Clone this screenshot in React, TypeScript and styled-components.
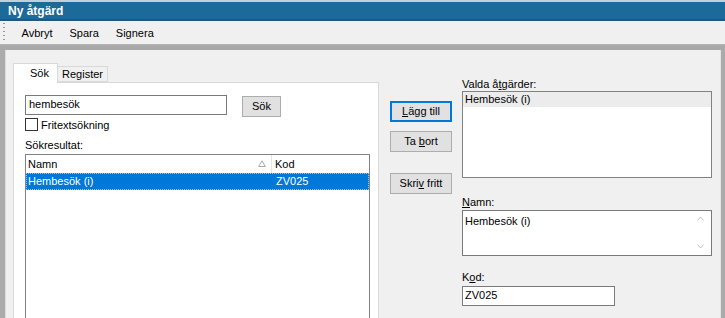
import React from "react";
import styled, { createGlobalStyle } from "styled-components";

const GlobalStyle = createGlobalStyle`
  html, body { margin: 0; padding: 0; background: #f0f0f0; }
  body { font-family: "Liberation Sans", Arial, sans-serif; font-size: 11px; color: #000; }
  * { box-sizing: border-box; }
`;

const Window = styled.div`
  width: 725px;
  height: 318px;
  overflow: hidden;
  display: flex;
  flex-direction: column;
  background: #f0f0f0;
`;

const TopEdge = styled.div`
  height: 2px;
  background: #c3d0da;
  flex: none;
`;

const TitleBar = styled.div`
  height: 19px;
  flex: none;
  background: #1c6a9a;
  border-bottom: 2px solid #275777;
  color: #fff;
  font-weight: bold;
  font-size: 12px;
  line-height: 17px;
  padding: 1px 0 0 8px;
`;

const Toolbar = styled.div`
  height: 23px;
  flex: none;
  display: flex;
  align-items: center;
  padding-left: 3px;
  background: #f0f0f0;
`;

const Grip = styled.div`
  width: 2px;
  height: 19px;
  margin-right: 8px;
  background: repeating-linear-gradient(to bottom, #9a9a9a 0 1px, transparent 1px 4px);
`;

const ToolItem = styled.div`
  padding: 0 8.5px;
  line-height: 20px;
  color: #000;
`;

const Splitter = styled.div`
  height: 6px;
  flex: none;
  background: #a9a9a9;
  border-top: 1px solid #b4b4b4;
`;

const Body = styled.div`
  flex: 1;
  min-height: 0;
  display: flex;
  align-items: flex-start;
  padding: 13px 0 0 8px;
  border-left: 5px solid #ababab;
  border-right: 4px solid #ababab;
  box-shadow: inset 1px 0 0 #dcdcdc, inset -1px 0 0 #e4e4e4;
  overflow: hidden;
`;

const TabControl = styled.div`
  width: 366px;
  height: 300px;
  display: flex;
  flex-direction: column;
  flex: none;
`;

const TabStrip = styled.div`
  height: 19px;
  display: flex;
  align-items: flex-end;
  flex: none;
`;

const Tab = styled.div<{ $active?: boolean }>`
  position: relative;
  z-index: ${(p) => (p.$active ? 1 : 0)};
  height: ${(p) => (p.$active ? "20px" : "16px")};
  margin-bottom: ${(p) => (p.$active ? "-1px" : "0")};
  margin-left: ${(p) => (p.$active ? "0" : "-1px")};
  width: ${(p) => (p.$active ? "45px" : "51px")};
  padding-left: ${(p) => (p.$active ? "8px" : "0")};
  display: flex;
  align-items: center;
  justify-content: center;
  background: ${(p) => (p.$active ? "#ffffff" : "#f0f0f0")};
  border: 1px solid #d9d9d9;
  border-bottom: ${(p) => (p.$active ? "none" : "1px solid #d9d9d9")};
  padding-bottom: ${(p) => (p.$active ? "2px" : "0")};
`;

const TabPanel = styled.div`
  flex: 1;
  background: #ffffff;
  border: 1px solid #d9d9d9;
  padding: 12px 0 0 11px;
  display: flex;
  flex-direction: column;
`;

const SearchRow = styled.div`
  display: flex;
  align-items: flex-start;
  gap: 15px;
`;

const TextBox = styled.div<{ $w: number; $h?: number }>`
  width: ${(p) => p.$w}px;
  height: ${(p) => p.$h ?? 20}px;
  border: 1px solid #7a7a7a;
  background: #fff;
  padding: 0 3px;
  line-height: 17px;
  white-space: nowrap;
`;

const Button = styled.div<{ $w: number; $focused?: boolean }>`
  width: ${(p) => p.$w}px;
  height: 21px;
  flex: none;
  background: #e1e1e1;
  border: 1px solid ${(p) => (p.$focused ? "#0078d7" : "#adadad")};
  box-shadow: ${(p) => (p.$focused ? "inset 0 0 0 1px #0078d7" : "none")};
  display: flex;
  align-items: center;
  justify-content: center;
  padding-bottom: 1px;
`;

const SearchButton = styled(Button)`
  margin-top: 1px;
`;

const U = styled.span`
  text-decoration: underline;
  text-underline-offset: 1px;
`;

const CheckRow = styled.div`
  display: flex;
  align-items: center;
  gap: 3px;
  margin-top: 1px;
  height: 13px;
`;

const CheckBox = styled.div`
  width: 13px;
  height: 13px;
  border: 1px solid #333;
  background: #fff;
`;

const FieldLabel = styled.div<{ $top: number }>`
  margin-top: ${(p) => p.$top}px;
  line-height: 13px;
  height: 13px;
`;

const ListView = styled.div`
  margin-top: 2px;
  width: 345px;
  height: 200px;
  border: 1px solid #828282;
  background: #fff;
`;

const ListHeader = styled.div`
  display: flex;
  height: 18px;
`;

const HeaderCell = styled.div<{ $w?: number }>`
  position: relative;
  width: ${(p) => (p.$w ? `${p.$w}px` : "auto")};
  flex: ${(p) => (p.$w ? "none" : "1")};
  padding-left: ${(p) => (p.$w ? "2px" : "3px")};
  line-height: 18px;
  border-right: ${(p) => (p.$w ? "1px solid #e5e5e5" : "none")};
  display: flex;
  align-items: center;
`;

const SortMark = styled.svg`
  position: absolute;
  right: 5px;
  top: 5px;
`;

const ListRow = styled.div`
  display: flex;
  height: 17px;
  background: #0078d7;
  color: #fff;
  outline: 1px dotted #9cc8ef;
  outline-offset: -1px;
`;

const RowCell = styled.div<{ $w?: number }>`
  width: ${(p) => (p.$w ? `${p.$w}px` : "auto")};
  flex: ${(p) => (p.$w ? "none" : "1")};
  padding-left: ${(p) => (p.$w ? "2px" : "3px")};
  line-height: 16px;
`;

const ButtonColumn = styled.div`
  margin-left: 11px;
  padding-top: 38px;
  display: flex;
  flex-direction: column;
  flex: none;
`;

const ButtonGap = styled.div<{ $h: number }>`
  height: ${(p) => p.$h}px;
`;

const RightColumn = styled.div`
  margin-left: 10px;
  padding-top: 14px;
  width: 250px;
  display: flex;
  flex-direction: column;
  flex: none;
`;

const SideLabel = styled.div<{ $top: number }>`
  margin-top: ${(p) => p.$top}px;
  height: 14px;
  line-height: 14px;
`;

const PickList = styled.div`
  height: 87px;
  border: 1px solid #828282;
  background: #fff;
  padding: 0;
`;

const PickItem = styled.div`
  height: 15px;
  line-height: 14px;
  padding-left: 2px;
  background: #ececec;
`;

const MultiBox = styled.div`
  margin-top: 1px;
  height: 46px;
  border: 1px solid #7a7a7a;
  background: #fff;
  display: flex;
`;

const MultiText = styled.div`
  flex: 1;
  padding: 3px 0 0 2px;
  line-height: 14px;
`;

const ScrollTrack = styled.div`
  width: 17px;
  margin-right: 2px;
  display: flex;
  flex-direction: column;
  justify-content: space-between;
  align-items: center;
  padding: 5px 0 6px;
`;

const KodBox = styled(TextBox)`
  margin-top: 2px;
  padding-left: 2px;
`;

const Chevron = ({ up }: { up?: boolean }) => (
  <svg width="7" height="5" viewBox="0 0 7 5">
    <path
      d={up ? "M0.5 4.5 L3.5 1 L6.5 4.5" : "M0.5 0.5 L3.5 4 L6.5 0.5"}
      fill="none"
      stroke="#c2c2c2"
      strokeWidth="1"
    />
  </svg>
);

export default function App() {
  return (
    <>
      <GlobalStyle />
      <Window>
        <TopEdge />
        <TitleBar>Ny åtgärd</TitleBar>
        <Toolbar>
          <Grip />
          <ToolItem>Avbryt</ToolItem>
          <ToolItem>Spara</ToolItem>
          <ToolItem>Signera</ToolItem>
        </Toolbar>
        <Splitter />
        <Body>
          <TabControl>
            <TabStrip>
              <Tab $active>Sök</Tab>
              <Tab>Register</Tab>
            </TabStrip>
            <TabPanel>
              <SearchRow>
                <TextBox $w={202}>hembesök</TextBox>
                <SearchButton $w={39}>Sök</SearchButton>
              </SearchRow>
              <CheckRow>
                <CheckBox />
                <span>Fritextsökning</span>
              </CheckRow>
              <FieldLabel $top={8}>Sökresultat:</FieldLabel>
              <ListView>
                <ListHeader>
                  <HeaderCell $w={246}>
                    Namn
                    <SortMark width="8" height="7" viewBox="0 0 8 7">
                      <path d="M4 0.8 L7.4 6.5 L0.6 6.5 Z" fill="none" stroke="#a8a8a8" strokeWidth="1" />
                    </SortMark>
                  </HeaderCell>
                  <HeaderCell>Kod</HeaderCell>
                </ListHeader>
                <ListRow>
                  <RowCell $w={247}>Hembesök (i)</RowCell>
                  <RowCell>ZV025</RowCell>
                </ListRow>
              </ListView>
            </TabPanel>
          </TabControl>
          <ButtonColumn>
            <Button $w={62} $focused>
              <span>
                <U>L</U>ägg till
              </span>
            </Button>
            <ButtonGap $h={9} />
            <Button $w={62}>
              <span>
                Ta <U>b</U>ort
              </span>
            </Button>
            <ButtonGap $h={21} />
            <Button $w={62}>
              <span>
                Skri<U>v</U> fritt
              </span>
            </Button>
          </ButtonColumn>
          <RightColumn>
            <SideLabel $top={0}>
              Valda å<U>t</U>gärder:
            </SideLabel>
            <PickList>
              <PickItem>Hembesök (i)</PickItem>
            </PickList>
            <SideLabel $top={17}>
              <U>N</U>amn:
            </SideLabel>
            <MultiBox>
              <MultiText>Hembesök (i)</MultiText>
              <ScrollTrack>
                <Chevron up />
                <Chevron />
              </ScrollTrack>
            </MultiBox>
            <SideLabel $top={14}>
              K<U>o</U>d:
            </SideLabel>
            <KodBox $w={153}>ZV025</KodBox>
          </RightColumn>
        </Body>
      </Window>
    </>
  );
}
